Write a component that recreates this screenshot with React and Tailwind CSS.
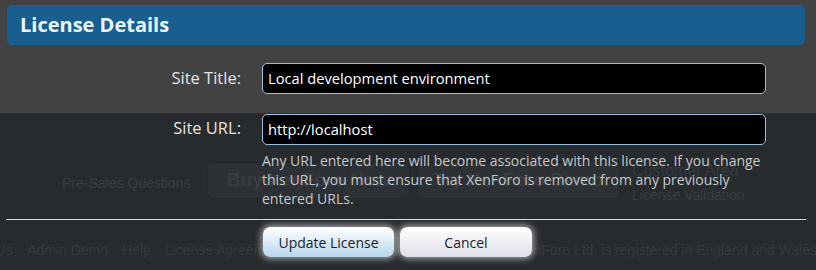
import React from "react";

export default function App() {
  const ui = { fontFamily: "'Open Sans', Lato, sans-serif" };
  const arial = { fontFamily: "'Liberation Sans', Arial, sans-serif" };
  return (
    <div className="relative w-[816px] h-[270px] overflow-hidden bg-[#282b2e]">
      {/* page behind the overlay */}
      <div className="h-[113px] bg-[#424242]" />
      <div className="h-px bg-[#2c3035]" />
      <div className="flex items-start pt-[48px] text-[#3a3d40]" style={arial}>
        <div className="w-[207px] pl-[62px] pt-[10px] text-[14px] leading-[22px]">Pre-Sales Questions</div>
        <div className="w-[203px] h-[37px] rounded-md border border-[#25282b] bg-[#2d3034] flex items-center justify-center text-[19px] font-bold">Buy XenForo Now</div>
        <div className="ml-[7px] w-[203px] h-[37px] rounded-md border border-[#25282b] bg-[#2d3034] flex items-center justify-center text-[19px] font-bold">Try XenForo Demo</div>
        <div className="ml-[12px] flex flex-col text-[14px] leading-[25px] -mt-[4px]">
          <span className="text-[#353a40] text-[16px]">Customer Area</span>
          <span>License Validation</span>
        </div>
      </div>
      <div className="absolute left-0 right-0 top-[240px] flex justify-between text-[14px] leading-[20px] text-[#36393c]" style={arial}>
        <div className="flex gap-[14px] -ml-[4px]">
          <span>Us</span>
          <span>Admin Demo</span>
          <span>Help</span>
          <span>License Agreement</span>
        </div>
        <span className="-mr-[1px]">XenForo Ltd. is registered in England and Wales</span>
      </div>

      {/* overlay dialog */}
      <div className="absolute inset-0 flex flex-col pt-[5px] px-[7px]" style={ui}>
        <div className="h-[40px] rounded-[5px] bg-[#185e8f] mr-[4px] flex items-center pl-[13px]">
          <span className="text-[20px] font-bold text-[#eef4fb] leading-none">License Details</span>
        </div>
        <div className="flex flex-col gap-[20px] mt-[18px]">
          <div className="flex items-center">
            <label className="w-[234px] text-right text-[16.5px] text-[#e6e6e6]">Site Title:</label>
            <div className="ml-[21px] w-[504px] h-[31px] rounded-[5px] border border-[#9cc2de] bg-black flex items-center pl-[5px] text-[14.7px] text-white">Local development environment</div>
          </div>
          <div className="flex items-start">
            <label className="w-[234px] text-right text-[16.5px] text-[#e6e6e6] pt-[2px]">Site URL:</label>
            <div className="ml-[21px] w-[504px] flex flex-col">
              <div className="h-[31px] rounded-[5px] border border-[#9cc2de] bg-black flex items-center pl-[5px] text-[14.7px] text-white">http://localhost</div>
              <p className="mt-[6px] text-[14px] leading-[19px] text-[#c4c9cd]">Any URL entered here will become associated with this license. If you change this URL, you must ensure that XenForo is removed from any previously entered URLs.</p>
            </div>
          </div>
        </div>
        <div className="h-px bg-[#c6def0] mt-[11px] -ml-[1px] mr-[3px]" />
        <div className="flex gap-[6px] ml-[256px] mt-[7px]">
          <button className="w-[131px] h-[30px] rounded-[7px] bg-gradient-to-b from-[#ffffff] to-[#b7d6ec] text-[14px] text-[#1b1b2b] shadow-[0_0_6px_2px_rgba(255,255,255,0.55)]">Update License</button>
          <button className="w-[132px] h-[30px] rounded-[7px] bg-gradient-to-b from-[#ffffff] to-[#dedfe9] text-[14px] text-[#1b1b2b] shadow-[0_0_6px_2px_rgba(255,255,255,0.55)]">Cancel</button>
        </div>
      </div>
    </div>
  );
}
